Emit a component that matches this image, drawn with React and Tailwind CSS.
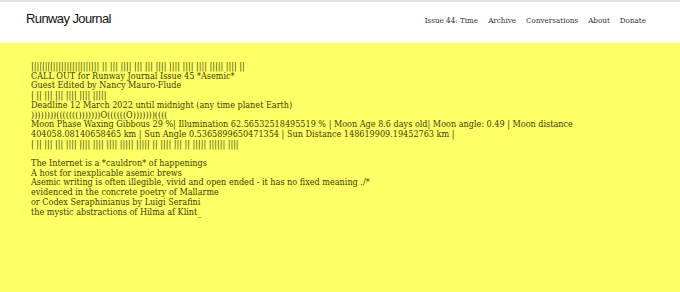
export default function App() {
  const serif = { fontFamily: '"DejaVu Serif", serif' };
  return (
    <div className="w-[680px] h-[292px] flex flex-col bg-[#ffff66]">
      <header className="h-[43px] shrink-0 bg-white border-t-2 border-[#e0e0e0] flex items-start justify-between pl-[26px] pr-[34px]">
        <div className="mt-[7px] text-[13px] tracking-[-0.6px] text-[#111]" style={{ fontFamily: '"Liberation Sans", Arial, sans-serif' }}>Runway Journal</div>
        <nav className="mt-[13px] flex gap-[10px] text-[8px] font-stretch-condensed text-[#333]" style={serif}>
          <span>Issue 44: Time</span>
          <span>Archive</span>
          <span>Conversations</span>
          <span>About</span>
          <span>Donate</span>
        </nav>
      </header>
      <main className="pl-[31px] pt-[19px] text-[9px] leading-[9.7px] font-stretch-condensed text-[#3d3d00]" style={serif}>
        <div>||||||||||||||||||||||||| || ||| |||| ||| ||| |||| |||| |||| |||| ||||| |||| ||</div>
        <div>CALL OUT for Runway Journal Issue 45 *Asemic*</div>
        <div>Guest Edited by Nancy Mauro-Flude</div>
        <div>| || ||| ||| |||| |||| |||||</div>
        <div>Deadline 12 March 2022 until midnight (any time planet Earth)</div>
        <div>))))))))((((((()))))))O((((((O)))))))((((</div>
        <div>Moon Phase Waxing Gibbous 29 %| Illumination 62.56532518495519 % | Moon Age 8.6 days old| Moon angle: 0.49 | Moon distance</div>
        <div>404058.08140658465 km | Sun Angle 0.5365899650471354 | Sun Distance 148619909.19452763 km |</div>
        <div>| || ||| ||| |||| |||| |||| |||| ||||| ||||| || |||| ||| || ||||| |||||| ||||</div>
        <div className="h-[9.7px]"></div>
        <div>The Internet is a *cauldron* of happenings</div>
        <div>A host for inexplicable asemic brews</div>
        <div>Asemic writing is often illegible, vivid and open ended - it has no fixed meaning ./*</div>
        <div>evidenced in the concrete poetry of Mallarme</div>
        <div>or Codex Seraphinianus by Luigi Serafini</div>
        <div>the mystic abstractions of Hilma af Klint_</div>
      </main>
    </div>
  );
}
